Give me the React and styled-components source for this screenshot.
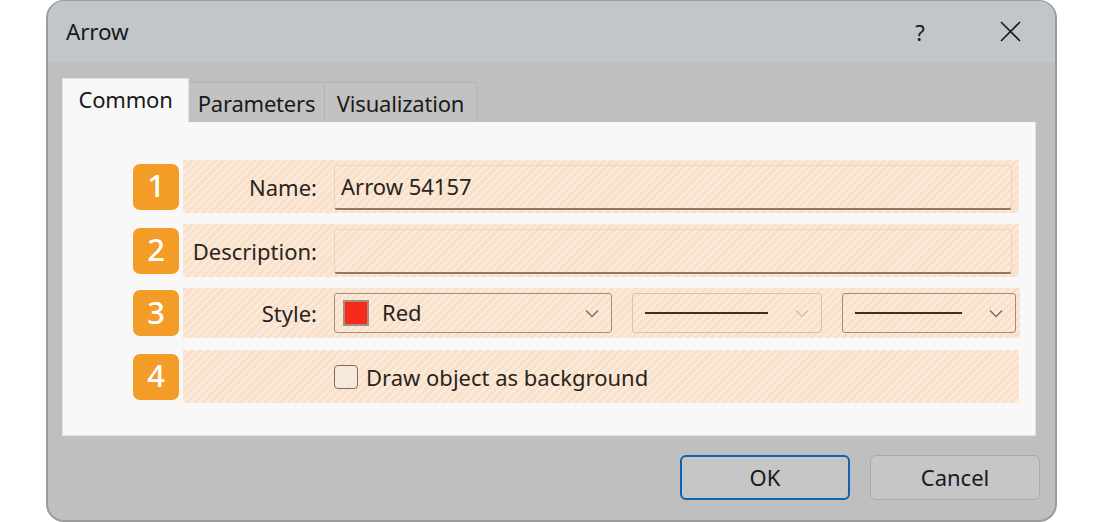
import React from "react";
import styled, { createGlobalStyle } from "styled-components";

const Global = createGlobalStyle`
  html, body { margin: 0; padding: 0; background: #ffffff; }
  body { font-family: "Noto Sans", "Open Sans", sans-serif; color: #1b1b1b; }
  * { box-sizing: border-box; }
`;

const Page = styled.div`
  width: 1100px;
  height: 522px;
  padding-left: 46px;
`;

const Dialog = styled.div`
  width: 1011px;
  height: 522px;
  border: 2px solid #9b9b9b;
  border-top-width: 1px;
  border-radius: 18px;
  overflow: hidden;
  display: flex;
  flex-direction: column;
  background: #bfbfbf;
`;

const TitleBar = styled.div`
  height: 61px;
  flex: none;
  background: #c1c6c8;
  display: flex;
  align-items: center;
  padding-left: 18px;
  padding-right: 34px;
`;

const Title = styled.div`
  flex: 1;
  font-size: 22.5px;
  color: #1a1a1a;
  letter-spacing: -0.2px;
  padding-bottom: 1px;
`;

const TitleButton = styled.div`
  width: 22px;
  height: 24px;
  display: flex;
  align-items: center;
  justify-content: center;
  font-size: 22px;
  color: #1a1a1a;
  margin-left: ${(p) => p.$gap || 0}px;
`;

const Body = styled.div`
  flex: 1;
  padding: 16px 19px 0 14px;
  display: flex;
  flex-direction: column;
`;

const Tabs = styled.div`
  display: flex;
  align-items: flex-end;
  height: 44px;
`;

const Tab = styled.div`
  height: ${(p) => (p.$active ? 44 : 40)}px;
  width: ${(p) => p.$w}px;
  display: flex;
  align-items: center;
  justify-content: center;
  font-size: 22px;
  letter-spacing: -0.2px;
  color: #1a1a1a;
  background: ${(p) => (p.$active ? "#f8f8f8" : "#c2c2c2")};
  border: 1px solid ${(p) => (p.$active ? "#e2e2e2" : "#b3b3b3")};
  border-bottom: none;
  border-left-width: ${(p) => (p.$first ? 1 : 0)}px;
  padding-bottom: ${(p) => (p.$active ? 4 : 0)}px;
  position: relative;
  z-index: ${(p) => (p.$active ? 1 : 0)};
`;

const Panel = styled.div`
  height: 314px;
  background: #f8f8f8;
  border: 1px solid #e2e2e2;
  border-top: none;
  padding: 38px 16px 0 70px;
  display: flex;
  flex-direction: column;
`;

const Row = styled.div`
  display: flex;
  align-items: center;
  gap: 4px;
  height: ${(p) => p.$h}px;
  margin-top: ${(p) => p.$mt || 0}px;
`;

const Badge = styled.div`
  width: 46px;
  height: 46px;
  flex: none;
  border-radius: 7px;
  background: #f39c28;
  color: #ffffff;
  font-size: 31px;
  font-weight: 500;
  display: flex;
  align-items: center;
  justify-content: center;
  line-height: 1;
  padding-bottom: 2px;
`;

const Hatch = styled.div`
  flex: 1;
  height: 100%;
  display: grid;
  grid-template-columns: 134px 1fr;
  column-gap: 17px;
  align-items: center;
  padding-right: 4px;
  background: repeating-linear-gradient(
    135deg,
    #f9e1c9 0px,
    #f9e1c9 3px,
    #fbeadb 3px,
    #fbeadb 5.5px
  );
`;

const Label = styled.div`
  text-align: right;
  font-size: 22px;
  color: #2a2420;
  white-space: nowrap;
`;

const TextField = styled.div`
  height: 45px;
  margin-right: 3px;
  margin-top: ${(p) => p.$mt || 0}px;
  border: 1px solid #ecd3bb;
  border-bottom: 2px solid #8e7b69;
  border-radius: 3px;
  display: flex;
  align-items: center;
  padding-left: 6px;
  padding-bottom: 3px;
  font-size: 22px;
  color: #2a2420;
`;

const Fields = styled.div`
  display: flex;
  gap: 20px;
  height: 40px;
`;

const Select = styled.div`
  width: ${(p) => p.$w}px;
  height: 40px;
  border: 1.5px solid ${(p) => (p.$disabled ? "#d6c2ad" : "#a08d7b")};
  border-radius: 3px;
  display: flex;
  align-items: center;
  padding: 0 12px 0 8px;
  gap: 13px;
  font-size: 22px;
  color: #2a2420;
`;

const Swatch = styled.div`
  width: 26px;
  height: 26px;
  background: #f42a1b;
  border: 2px solid #a09080;
  flex: none;
`;

const SelectText = styled.div`
  flex: 1;
  padding-bottom: 2px;
`;

const LineSample = styled.div`
  flex: 1;
  height: 2px;
  background: #4c2c12;
  margin-left: 4px;
  margin-right: 14px;
`;

const Check = styled.div`
  display: flex;
  align-items: center;
  gap: 8px;
  font-size: 22px;
  color: #2a2420;
  grid-column: 2;
`;

const Box = styled.div`
  width: 24px;
  height: 24px;
  border: 1.5px solid #7d6d5f;
  border-radius: 4px;
  background: #f6e8da;
`;

const Footer = styled.div`
  display: flex;
  justify-content: flex-end;
  gap: 20px;
  padding-top: 19px;
  margin-right: -4px;
`;

const Button = styled.div`
  width: 170px;
  height: 45px;
  border-radius: 6px;
  background: #c6c6c6;
  border: ${(p) => (p.$default ? "2px solid #0f62ae" : "1px solid #a9a9a9")};
  display: flex;
  align-items: center;
  justify-content: center;
  font-size: 22px;
  color: #1a1a1a;
  padding-bottom: 2px;
`;

const Chevron = ({ color }) => (
  <svg width="14" height="9" viewBox="0 0 14 9" style={{ flex: "none" }}>
    <path d="M1 1.5 L7 7.5 L13 1.5" fill="none" stroke={color} strokeWidth="1.3" />
  </svg>
);

export default function App() {
  return (
    <Page>
      <Global />
      <Dialog>
        <TitleBar>
          <Title>Arrow</Title>
          <TitleButton>?</TitleButton>
          <TitleButton $gap={68}>
            <svg width="21" height="21" viewBox="0 0 21 21">
              <path d="M1 1 L20 20 M20 1 L1 20" stroke="#1a1a1a" strokeWidth="1.6" />
            </svg>
          </TitleButton>
        </TitleBar>
        <Body>
          <Tabs>
            <Tab $active $first $w={127}>Common</Tab>
            <Tab $w={136}>Parameters</Tab>
            <Tab $w={152}>Visualization</Tab>
          </Tabs>
          <Panel>
            <Row $h={53}>
              <Badge>1</Badge>
              <Hatch>
                <Label>Name:</Label>
                <TextField $mt={2}>Arrow 54157</TextField>
              </Hatch>
            </Row>
            <Row $h={53} $mt={11}>
              <Badge>2</Badge>
              <Hatch>
                <Label>Description:</Label>
                <TextField $mt={2}></TextField>
              </Hatch>
            </Row>
            <Row $h={50} $mt={11}>
              <Badge>3</Badge>
              <Hatch>
                <Label>Style:</Label>
                <Fields>
                  <Select $w={278}>
                    <Swatch />
                    <SelectText>Red</SelectText>
                    <Chevron color="#7a6a5c" />
                  </Select>
                  <Select $w={190} $disabled>
                    <LineSample />
                    <Chevron color="#d2bfae" />
                  </Select>
                  <Select $w={174}>
                    <LineSample />
                    <Chevron color="#7a6a5c" />
                  </Select>
                </Fields>
              </Hatch>
            </Row>
            <Row $h={53} $mt={12}>
              <Badge>4</Badge>
              <Hatch>
                <Check>
                  <Box />
                  Draw object as background
                </Check>
              </Hatch>
            </Row>
          </Panel>
          <Footer>
            <Button $default>OK</Button>
            <Button>Cancel</Button>
          </Footer>
        </Body>
      </Dialog>
    </Page>
  );
}
